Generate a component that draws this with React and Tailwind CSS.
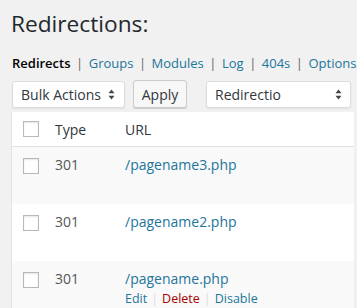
import React from "react";

const font = { fontFamily: '"Open Sans", "Noto Sans", sans-serif' };

function Arrows() {
  return (
    <svg width="7" height="11" viewBox="0 0 7 11" className="shrink-0">
      <path d="M3.5 0.5 L6.5 4.2 H0.5 Z" fill="#444" />
      <path d="M3.5 10.5 L6.5 6.8 H0.5 Z" fill="#444" />
    </svg>
  );
}

function Box() {
  return (
    <div className="w-[16px] h-[16px] bg-white border border-[#b4b9be] shadow-[inset_0_1px_2px_rgba(0,0,0,0.1)] shrink-0" />
  );
}

function Row({ bg, url, actions }) {
  return (
    <div className={`flex h-[57px] ${bg}`}>
      <div className="w-[43px] pl-[11px] pt-[11px]">
        <Box />
      </div>
      <div className="w-[70px] pt-[8px] text-[14px] leading-[20px] text-[#555]">301</div>
      <div className="pt-[8px] text-[14px] leading-[20px]">
        <div className="text-[#21759b]">{url}</div>
        {actions && (
          <div className="flex items-center text-[12.5px] leading-[19px]">
            <span className="text-[#21759b]">Edit</span>
            <span className="mx-[4px] text-[#ddd]">|</span>
            <span className="text-[#a00]">Delete</span>
            <span className="mx-[4px] text-[#ddd]">|</span>
            <span className="text-[#21759b]">Disable</span>
          </div>
        )}
      </div>
    </div>
  );
}

function Sep() {
  return <span className="mx-[5.5px] text-[#666]">|</span>;
}

export default function App() {
  return (
    <div className="w-[357px] h-[308px] bg-[#f1f1f1] overflow-hidden pl-[11px]" style={font}>
      <h1 className="pt-[8px] text-[22.7px] leading-[31px] text-[#23282d] font-normal">Redirections:</h1>
      <div className="mt-[14px] flex items-center text-[13px] leading-[20px] text-[#21759b] whitespace-nowrap">
        <span className="font-semibold text-[#000] pl-[1px]">Redirects</span>
        <Sep />
        <span>Groups</span>
        <Sep />
        <span>Modules</span>
        <Sep />
        <span>Log</span>
        <Sep />
        <span>404s</span>
        <Sep />
        <span>Options</span>
      </div>
      <div className="mt-[7px] flex items-center h-[28px] text-[14px] text-[#32373c]">
        <div className="ml-[1px] w-[113px] h-[27px] bg-white border border-[#ddd] rounded-[3px] shadow-[0_1px_2px_rgba(0,0,0,0.07)] flex items-center justify-between pl-[8px] pr-[9px]">
          <span>Bulk Actions</span>
          <Arrows />
        </div>
        <div className="ml-[8px] w-[54px] h-[28px] bg-[#f7f7f7] border border-[#ccc] rounded-[3px] shadow-[0_1px_0_#ccc] flex items-center justify-center">
          Apply
        </div>
        <div className="ml-[19px] w-[145px] h-[27px] bg-white border border-[#ddd] rounded-[3px] shadow-[0_1px_2px_rgba(0,0,0,0.07)] flex items-center justify-between pl-[8px] pr-[8px]">
          <span>Redirectio</span>
          <Arrows />
        </div>
      </div>
      <div className="mt-[4px] w-[343px] bg-white border-l border-[#e5e5e5] shadow-[0_1px_1px_rgba(0,0,0,0.04)]">
        <div className="flex h-[35px] items-center border-b border-[#e1e1e1] text-[14px] text-[#32373c]">
          <div className="w-[43px] pl-[11px]">
            <Box />
          </div>
          <div className="w-[70px]">Type</div>
          <div>URL</div>
        </div>
        <Row bg="bg-[#f9f9f9]" url="/pagename3.php" />
        <Row bg="bg-white" url="/pagename2.php" />
        <Row bg="bg-[#f9f9f9]" url="/pagename.php" actions />
      </div>
    </div>
  );
}
